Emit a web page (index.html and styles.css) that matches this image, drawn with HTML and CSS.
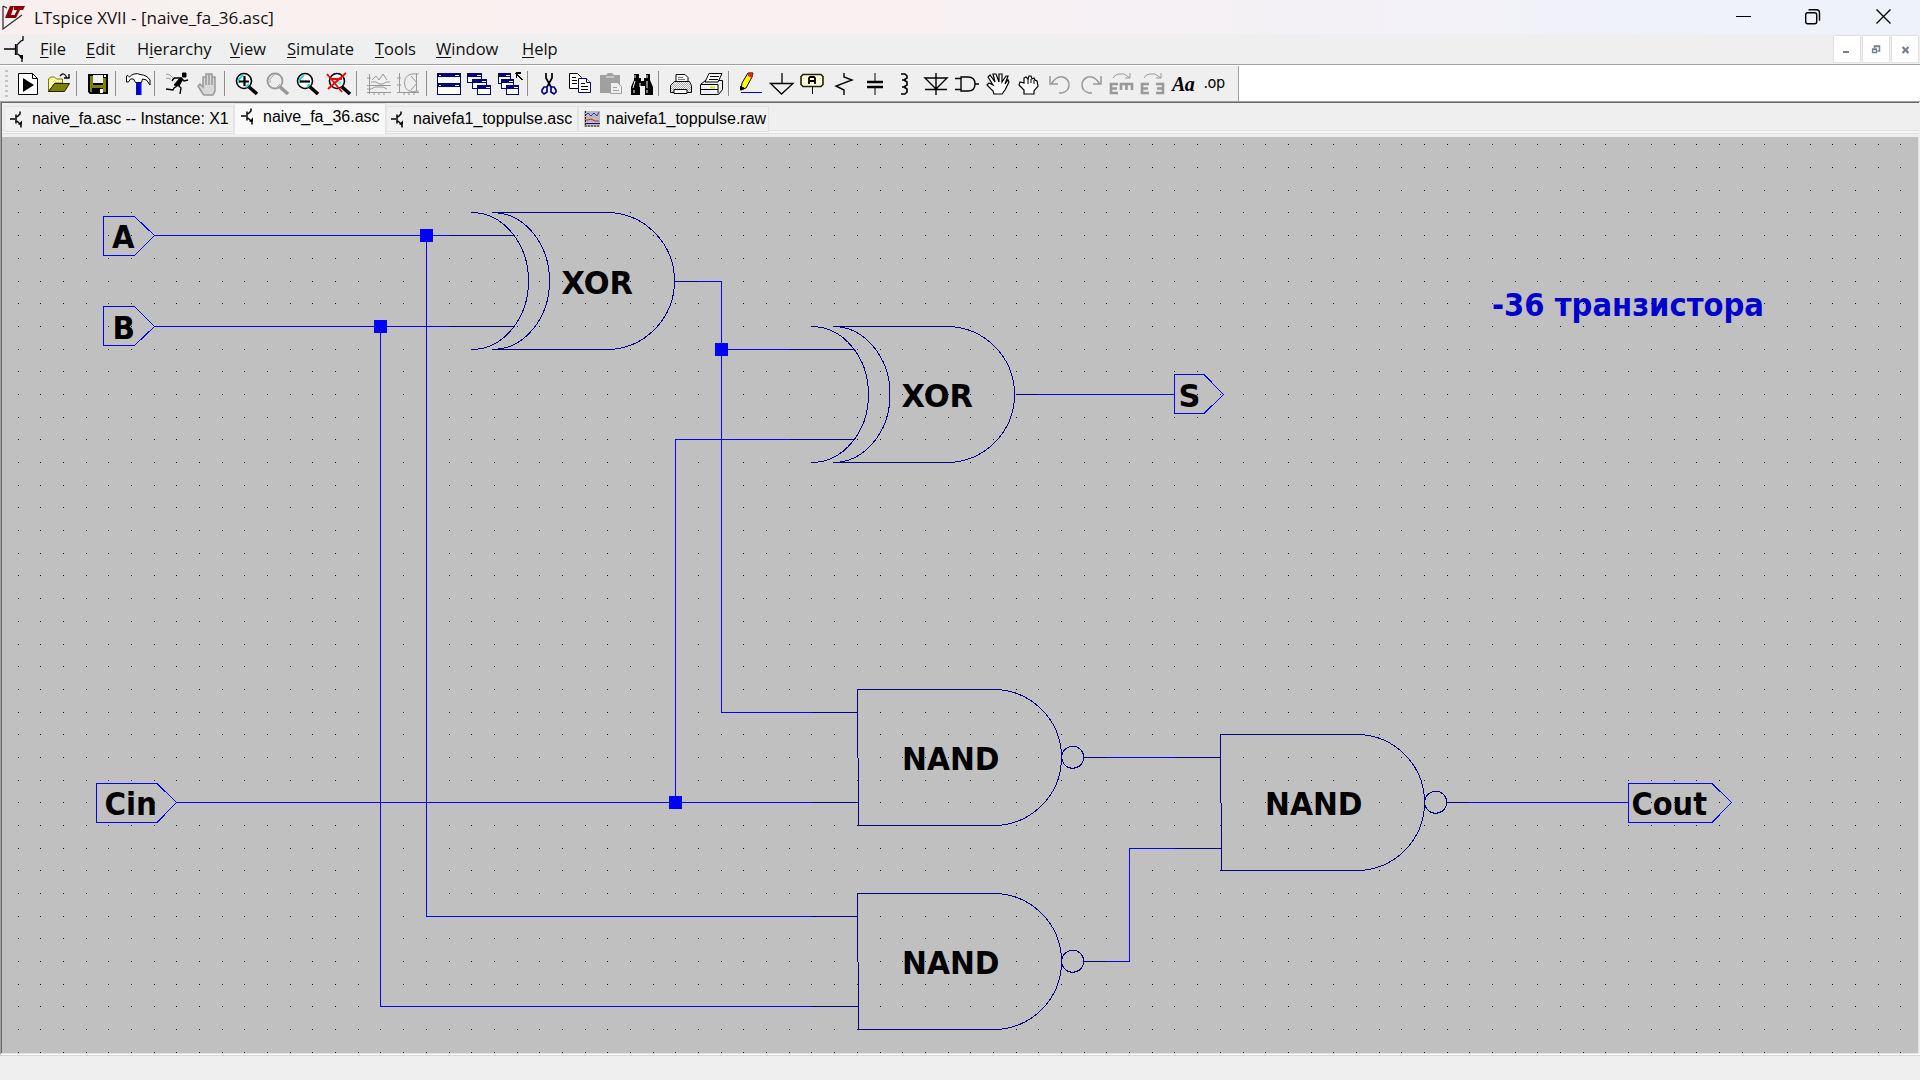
FILE: index.html
```html
<!DOCTYPE html>
<html lang="en">
<head>
<meta charset="utf-8">
<title>LTspice XVII - [naive_fa_36.asc]</title>
<link rel="stylesheet" href="styles.css">
</head>
<body>
<svg class="defs" aria-hidden="true">
  <defs>
    <pattern id="dither" width="2" height="2" patternUnits="userSpaceOnUse"><rect width="2" height="2" fill="#fff"/><path d="M0 .5h1M1 1.5h1" stroke="#aaa"/></pattern>
    <pattern id="ydither" width="2" height="2" patternUnits="userSpaceOnUse"><rect width="2" height="2" fill="#ffff58"/><path d="M0 .5h1M1 1.5h1" stroke="#fff"/></pattern>
    <symbol id="transistor" viewBox="0 0 14 16"><path d="M0 7.500h5M6 3v9M7 5.500l3-3V0M7 9.500l4 4V16" fill="none" stroke="#000" stroke-width="1.500"/><path d="M8 13h4v-4z"/></symbol>
    <symbol id="nand" viewBox="0 0 230 138"><path d="M.5 68.500V.5H136.500A68 68 0 0 1 136.500 136.500H.5M1.500 68.500V136.500"/><circle cx="215.700" cy="68.300" r="11"/></symbol>
  </defs>
</svg>
<div class="app">
  <header class="titlebar">
    <svg class="logo" width="26" height="30" viewBox="0 0 26 30"><path d="M3 4v23l19-14M3 4l4 2" fill="none" stroke="#333" stroke-width="1.300"/><path d="M10 4h4l-3 9h4l-1 3H5zM14 4h11l-2 4h-3l-4 8h-3l4-8h-3z" fill="#8b0008"/></svg>
    <h1 class="title">LTspice XVII - [naive_fa_36.asc]</h1>
    <svg class="winctl" width="160" height="34" viewBox="1736 0 160 34" fill="none" stroke="#000" stroke-width="1.400"><path d="M1736 16.500h15" stroke-width="1"/><rect x="1805.700" y="12.700" width="11" height="11" rx="2"/><path d="M1808.500 9.700h8q3 0 3 3v8"/><path d="M1876.500 9.500l14 14m0-14l-14 14"/></svg>
  </header>
  <nav class="menubar">
    <svg class="menu-icon" width="22" height="26" viewBox="0 0 22 26"><path d="M1 13h11M12.500 8v11M14 8v11M14 9l4-4 2-1V0M15 18l4 4v4" fill="none" stroke="#000" stroke-width="1.300"/><path d="M16 19h4v4h-2z"/></svg>
    <span class="m file"><u>F</u>ile</span><span class="m edit"><u>E</u>dit</span><span class="m hier">H<u>i</u>erarchy</span><span class="m view"><u>V</u>iew</span><span class="m sim"><u>S</u>imulate</span><span class="m tools"><u>T</u>ools</span><span class="m win"><u>W</u>indow</span><span class="m help"><u>H</u>elp</span>
    <div class="mdi">
      <span><svg width="26" height="26"><path d="M9 16h6" stroke="#74808e" stroke-width="2"/></svg></span>
      <span><svg width="26" height="26" fill="none" stroke="#74808e"><path d="M11.500 12v-2h5v5h-2M11 10.500h6" stroke-width="1.500"/><path d="M9.500 13.500h4v3h-4zM9 13h5" stroke-width="1.300"/></svg></span>
      <span><svg width="26" height="26"><path d="M10.500 11l6 6m0-6l-6 6" stroke="#74808e" stroke-width="2.200"/></svg></span>
    </div>
  </nav>
  <div class="toolrow">
    <div class="toolbar">
      <i class="grip"></i>
      <b><svg viewBox="0 0 24 24"><path d="M2.500 1.500h14l5 5v16h-19z" fill="#fff" stroke="#000"/><path d="M16.500 1.500v5h5" fill="none" stroke="#000"/><path d="M7 6l11 7-11 7z"/></svg></b>
      <b><svg viewBox="0 0 24 24"><path d="M1.500 20V7l2-2h4l2 2h6v4H8z" fill="url(#ydither)" stroke="#770"/><path d="M1.500 19.500l6-8h15l-5 8z" fill="#808000" stroke="#220"/><path d="M13 4q4-5 7 2m2-4v4h-5" fill="none" stroke="#000" stroke-width="1.300"/></svg></b>
      <s></s>
      <b><svg viewBox="0 0 24 24"><path d="M2 2h20v20H4l-2-2z"/><path d="M4 4h3v9h10V6h3v14h-3v-4H6v4H4z" fill="#808000"/><path d="M7 3h10v8H7z" fill="#efefef"/><path d="M18 3h2v2h-2zM14 17h3v4h-3z" fill="#fff"/></svg></b>
      <s></s>
      <b><svg viewBox="0 0 24 24"><path d="M.5 4v6h2l2-3h3l2 3.500h6l1-3.500 4 1 3.500 5V8Q21 3 14 2.500 12 1 8 2 5 3 3.500 5L2 3.500z" fill="#fff" stroke="#000"/><path d="M10 11h5.500v12H10z" fill="#00f"/><path d="M11 11h1.500v11H11z" fill="#000080"/></svg></b>
      <s></s>
      <b><svg viewBox="0 0 24 24" fill="none" stroke="#000"><path d="M17.500 1h3.500v4h-3.500z" fill="#000"/><path d="M9 6h8M17 7l2 2 4-1M9 6L7 9M13 13l3 3-1 6M12 14l-3 2-1 2-7-1" stroke-width="1.400"/><path d="M15 6l-6 7 5 1 4-7z" fill="#000"/><path d="M1 2l4 1 3 3M1 6l5 1" stroke="#999"/></svg></b>
      <b><svg viewBox="0 0 24 24"><path d="M7 22l-5-8 2-2 3 3V5h3v8V2h3v11V2h3v11V5h3v14l-2 4H8z" fill="#d8d8d8" stroke="#999" stroke-width="1.500"/></svg></b>
      <s></s>
      <b><svg viewBox="0 0 24 24"><circle cx="9" cy="9" r="7.500" fill="#fff" stroke="#000" stroke-width="1.600"/><path d="M4 11V7l4-4M11 15l3-3" stroke="#2dd" stroke-width="2" fill="none"/><path d="M4 9.500h10M9.500 4v10" stroke="#000" stroke-width="2.200"/><path d="M14 15l8 7" stroke="#000" stroke-width="3.600"/></svg></b>
      <b><svg viewBox="0 0 24 24"><circle cx="9" cy="9" r="7.500" fill="#eee" stroke="#999" stroke-width="1.800"/><path d="M4 11V7l4-4M11 15l3-3" stroke="#aaa" fill="none"/><path d="M14 15l8 7" stroke="#999" stroke-width="3.600"/></svg></b>
      <b><svg viewBox="0 0 24 24"><circle cx="9" cy="9" r="7.500" fill="#fff" stroke="#000" stroke-width="1.600"/><path d="M4 11V7l4-4M11 15l3-3" stroke="#2dd" stroke-width="2" fill="none"/><path d="M4 9.500h10" stroke="#000" stroke-width="2.200"/><path d="M14 15l8 7" stroke="#000" stroke-width="3.600"/></svg></b>
      <b><svg viewBox="0 0 24 24"><circle cx="10" cy="9" r="7.500" fill="#fff" stroke="#000" stroke-width="1.600"/><path d="M6 10l4-5 4 5v3z" fill="#7ee"/><path d="M15 15l8 7" stroke="#000" stroke-width="3.600"/><path d="M0 2l15 18M19 1L1 17M3 7h12" stroke="#f00" stroke-width="1.800"/></svg></b>
      <s></s>
      <b><svg viewBox="0 0 24 24" fill="none" stroke="#999"><path d="M2.500 2v20M0 20.500h24M0 13.500h24M5 8l4-4 3 4 4-6 4 6M4 10h5l3 2h4l3-2h4M4 17l4-2h8l4 2M7 20v3m5-3v3m5-3v3M0 6h4M0 17h4"/></svg></b>
      <b><svg viewBox="0 0 24 24" fill="none" stroke="#999"><path d="M2.500 1v20M0 20.500h22M21.500 2q-14-2-14 9t14 8M14 4l6 7-6 7M19.500 1v18M0 6h4M0 13h4M7 20v3m5-3v3m5-3v3"/></svg></b>
      <s></s>
      <b><svg viewBox="0 0 24 24" shape-rendering="crispEdges"><path d="M0 1h24v22H0z" fill="#000080"/><path d="M1 5h22v6H1zM1 15h22v7H1z" fill="#fff"/><path d="M2 3h2M18 3h4M2 13h2M18 13h4" stroke="#fff"/></svg></b>
      <b><svg viewBox="0 0 24 24" shape-rendering="crispEdges"><path d="M0 1h15v10H0zM5 7h15v10H5zM10 13h14v10H10z" fill="#000080"/><path d="M1 5h13v2H5v3H1zM6 11h13v2h-9v3H6zM11 17h12v5H11zM9 3h1M12 3h2M14 9h1M17 9h2M19 15h1" fill="#fff"/><path d="M10 3h4M15 9h4M19 15h4" stroke="#fff"/></svg></b>
      <b><svg viewBox="0 0 24 24" shape-rendering="crispEdges"><path d="M0 1h13v11H0zM3 7h13v10H3zM8 13h13v10H8z" fill="#000080"/><path d="M1 5h11v2H3v4H1zM4 11h11v2H8v3H4zM9 17h11v5H9z" fill="#fff"/><path d="M8 3h4M11 9h4M16 15h4" stroke="#fff"/><path d="M18 1h5M18.500 1v5M18 1l6 7" stroke="#000" stroke-width="1.500"/></svg></b>
      <s></s>
      <b><svg viewBox="0 0 24 24" fill="none"><path d="M9 1v5l5 9M15 1v5l-5 9" stroke="#000" stroke-width="1.700"/><path d="M10 15H7l-2 3v2l2 2 3-2zM14 15h3l2 3v2l-2 2-3-2z" stroke="#000080" stroke-width="1.700"/></svg></b>
      <b><svg viewBox="0 0 24 24" fill="#fff"><path d="M1.500 1.500h8l4 4v11h-12z" stroke="#000"/><path d="M10.500 6.500h8l4 4v10h-12z" stroke="#000080"/><path d="M18.500 6.500v4h4" stroke="#000080"/><path d="M4 5.500h4M4 8.500h5M4 11.500h5M13 11.500h4M13 14.500h7M13 17.500h7" stroke="#000"/></svg></b>
      <b><svg viewBox="0 0 24 24"><path d="M1 3h6l2-2h4l2 2h6v18H1z" fill="#a0a0a0"/><path d="M7 5h8" stroke="#eee"/><path d="M11.500 10.500h7l4 4v7h-11z" fill="#eee" stroke="#a0a0a0"/><path d="M14 15.500h4M14 18.500h6" stroke="#a0a0a0"/></svg></b>
      <b><svg viewBox="0 0 24 24"><path d="M4 2h5v4h2v3h3V6h2V2h4v6l3 7v8h-8v-9h-5v9H1v-8l3-7z"/><path d="M5 3v3M17 3v3M5 9l-2 7M10 11v4M17 9v7M4 18v3M17 18v3" stroke="#fff"/></svg></b>
      <s></s>
      <b><svg viewBox="0 0 24 24"><path d="M7 10V2.500h9l3 3V10" fill="#fff" stroke="#000"/><path d="M1.500 20.500v-7l4-4h15l2 4v7z" fill="url(#dither)" stroke="#000"/><path d="M5 17.500h13v4H5z" fill="#fff" stroke="#000"/><path d="M9 5.500h5M9 7.500h7" stroke="#777"/></svg></b>
      <b><svg viewBox="0 0 24 24" fill="#fff" stroke="#000"><path d="M.5 12.500l5-4h17v9l-4 5H.5z" fill="#eee"/><path d="M5 10l4-8.500h13L18 10z"/><path d="M10 4.500h9M9 7.500h9M1 12.500h17v9M1 17.500h17"/><path d="M10 15.500h5" stroke="#dd0" stroke-width="2"/></svg></b>
      <s></s>
      <b><svg viewBox="0 0 24 24"><path d="M3 11l6-10h5l-1 4-6 11-5 2z" fill="#ff0" stroke="#000"/><path d="M9 2l2-2 3 2-1 4-4-2z" fill="#f02020"/><path d="M2 14v3l3-1" stroke="#000" stroke-width="2"/><path d="M2 20.500h21" stroke="#00f"/></svg></b>
      <b><svg viewBox="0 0 24 24" fill="none" stroke="#000" stroke-width="1.300"><path d="M12 1v11M.5 11.500h22.500L11.500 22z"/></svg></b>
      <b><svg viewBox="0 0 24 24"><path d="M2 2.500h18l2 2v8l-2 2H2l-2-2v-8z" fill="#ffffe0" stroke="#220" stroke-width="1.600"/><path d="M11.500 15v7" stroke="#000"/><path d="M8 12V6l1-1h4l1 1v6M8 9h6" stroke="#000" stroke-width="1.800" fill="none"/></svg></b>
      <b><svg viewBox="0 0 24 24" fill="none" stroke="#000" stroke-width="1.400"><path d="M12 1v4l8 3L4 14l8 4v5"/></svg></b>
      <b><svg viewBox="0 0 24 24" stroke="#000"><path d="M12 1v8M12 15v8"/><path d="M4 10h16M4 15h16" stroke-width="2.300"/></svg></b>
      <b><svg viewBox="0 0 24 24" fill="none" stroke="#000" stroke-width="1.600"><path d="M8 2h4l2 2v2l-3 2H9m2 0l3 2v3l-3 2H9m2 0l3 2v3l-2 2H8"/></svg></b>
      <b><svg viewBox="0 0 24 24" fill="none" stroke="#000" stroke-width="1.400"><path d="M1 6h22L12 17zM12 1v22M1 17.500h22"/></svg></b>
      <b><svg viewBox="0 0 24 24" fill="none" stroke="#000" stroke-width="1.400"><path d="M0 6.500h6M0 17.500h6M6 5h7q7 0 7 7t-7 7H6zM20 12h4"/></svg></b>
      <b><svg viewBox="0 0 24 24"><path d="M8 22l-1-3-6-6 2-2 4 2-5-8 2-2 5 7-2-8h3l3 8V2h3v8l4-6h2l-3 8 3-4 1 2-4 8-3 4z" fill="#fff" stroke="#000" stroke-width="1.200"/></svg></b>
      <b><svg viewBox="0 0 24 24"><path d="M7 22v-4l-5-5 1-3 4 1V6l2-1 2 2 1-3h2l1 3 2-1 1 2 2 1 1 5-4 5v3z" fill="#fff" stroke="#000" stroke-width="1.200"/><path d="M11 7v5M14 7v4M17 8v4" stroke="#000"/></svg></b>
      <b><svg viewBox="0 0 24 24" fill="none" stroke="#999" stroke-width="1.500"><path d="M2 4v8h8M3 12q6-9 12-7 6 2 6 8t-7 8h-3"/></svg></b>
      <b><svg viewBox="0 0 24 24" fill="none" stroke="#999" stroke-width="1.500"><path d="M22 4v8h-8M21 12Q15 3 9 5q-6 2-6 8t7 8h3"/></svg></b>
      <b><svg viewBox="0 0 24 24" fill="none" stroke="#999"><path d="M4 6q2-4 6-4h5l6 4m0-5v5h-5"/><path d="M9 12H2v9h7M2 16.500h6M12 18v-6h11v6M17.500 13v5" stroke-width="2.600"/></svg></b>
      <b><svg viewBox="0 0 24 24" fill="none" stroke="#999"><path d="M4 6q2-4 6-4h5l6 4m0-5v5h-5"/><path d="M9 12H2v9h7M2 16.500h6M16 12h7v9h-7M17 16.500h6" stroke-width="2.600"/></svg></b>
      <b class="aa">Aa</b>
      <b class="op">.op</b>
    </div>
  </div>
  <div class="workspace">
    <div class="tabs">
      <div class="tab t1"><svg width="14" height="17"><use href="#transistor"/></svg><span>naive_fa.asc -- Instance: X1</span></div>
      <div class="tab t2"><svg width="14" height="17"><use href="#transistor"/></svg><span>naive_fa_36.asc</span></div>
      <div class="tab t3"><svg width="14" height="17"><use href="#transistor"/></svg><span>naivefa1_toppulse.asc</span></div>
      <div class="tab t4"><svg width="16" height="16" fill="none"><path d="M0 0h16v16H0z" fill="#bbb"/><path d="M1 5l3-3 3 3 3-3 3 3 2-4" stroke="#33d"/><path d="M1 9h3l3-1 4 2h4" stroke="#d22"/><path d="M1 12.500h15" stroke="#118"/><path d="M1.500 0v14M1 15h15" stroke="#222" stroke-dasharray="2 1"/></svg><span>naivefa1_toppulse.raw</span></div>
    </div>
    <svg class="sheet" width="1916" height="916" viewBox="2 137 1916 916">
      <path id="grid" class="grid"/>
      <g class="wire">
        <path d="M154 235.500H449M426.500 235V916.500H812M154 326.500H449M380.500 326V1006.500H812M698 281.500H721.500V712.500H812M721 349.500H790M790 439.500H675.500V802.500M176 802.500H812M1038 394.500H1174M1106 757.500H1175M1106 961.500H1129.500V848.500H1175M1469 802.500H1628"/>
        <path d="M103.500 216.500h31L154.500 235.500L134.500 255.500h-31zM103.500 306.500h31L154.500 326.500L134.500 345.500h-31zM1174.500 374.500h29.500L1223.500 394.500L1204 413.500h-29.500zM96.500 783.500H157L176.500 802.500L157 822.500H96.500zM1628.500 783.500H1712L1731.500 802.500L1712 822.500H1628.500z"/>
      </g>
      <g class="node"><path d="M420 229h13v13h-13zM374 320h13v13h-13zM715 343h13v13h-13zM669 796h13v13h-13z"/></g>
      <g class="part">
        <path d="M449 235.500H514M449 326.500H514M674 281.500H698M790 349.500H854M790 439.500H854M1016 394.500H1038M812 712.500H857M812 802.500H858M812 916.500H857M812 1006.500H858M1084 757.500H1106M1084 961.500H1106M1175 757.500H1220M1175 848.500H1221M1447 802.500H1469"/>
        <path d="M471.500 212.500A57 68.500 0 0 1 471.500 349.500M492.500 212.500A57 68.500 0 0 1 492.500 349.500M492.500 212.500H606.500A68 68.500 0 0 1 606.500 349.500H492.500"/>
        <path d="M811.500 326.500A57 68 0 0 1 811.500 462.500M833 326.500A57 68 0 0 1 833 462.500M833 326.500H946.500A68 68 0 0 1 946.500 462.500H833"/>
        <use href="#nand" x="857" y="689" width="230" height="138"/>
        <use href="#nand" x="857" y="893" width="230" height="138"/>
        <use href="#nand" x="1220" y="734" width="230" height="138"/>
      </g>
      <g class="label">
        <text x="112" y="248" textLength="22.500" lengthAdjust="spacingAndGlyphs">A</text>
        <text x="112.500" y="339" textLength="22.500" lengthAdjust="spacingAndGlyphs">B</text>
        <text x="104.500" y="815" textLength="52.500" lengthAdjust="spacingAndGlyphs">Cin</text>
        <text x="561.500" y="294" textLength="71.500" lengthAdjust="spacingAndGlyphs">XOR</text>
        <text x="901.500" y="407" textLength="71.500" lengthAdjust="spacingAndGlyphs">XOR</text>
        <text x="1178.500" y="407" textLength="22" lengthAdjust="spacingAndGlyphs">S</text>
        <text x="902" y="770" textLength="97.500" lengthAdjust="spacingAndGlyphs">NAND</text>
        <text x="902" y="974" textLength="97.500" lengthAdjust="spacingAndGlyphs">NAND</text>
        <text x="1265" y="815" textLength="97.500" lengthAdjust="spacingAndGlyphs">NAND</text>
        <text x="1631.500" y="815" textLength="75.500" lengthAdjust="spacingAndGlyphs">Cout</text>
        <text class="note" x="1492" y="315.500" textLength="272" lengthAdjust="spacingAndGlyphs">-36 транзистора</text>
      </g>
    </svg>
  </div>
  <footer class="status"></footer>
</div>
<script src="grid.js"></script>
</body>
</html>
```
FILE: styles.css
```css
* { box-sizing: border-box; }
body { margin: 0; background: #efefef; overflow: hidden; }
.defs { display: block; width: 0; height: 0; }
.app { width: 1920px; height: 1080px; display: flex; flex-direction: column; font-family: "Open Sans", "Noto Sans", sans-serif; color: #111; }
.titlebar { height: 34px; display: flex; align-items: center; background: linear-gradient(90deg, #f9efef 0%, #f8f0f1 45%, #eff2fa 90%, #eef2fa 100%); padding-right: 24px; flex: none; }
.logo { margin: 0 8px 0 0; flex: none; }
.title { margin: 0; font-size: 17px; font-weight: 400; line-height: 34px; letter-spacing: 0; padding-top: 1px; white-space: nowrap; }
.winctl { margin-left: auto; }
.menubar { height: 31px; display: flex; align-items: center; border-bottom: 1px solid #a0a0a0; flex: none; font-size: 16.5px; }
.menu-icon { margin: 0 15px 0 3px; }
.m { white-space: nowrap; flex: none; line-height: 30px; }
.m u { text-underline-offset: 2px; text-decoration-thickness: 1px; }
.file { width: 46px; margin-left: 0; }
.edit { width: 51px; }
.hier { width: 93px; }
.view { width: 57px; }
.sim { width: 88px; }
.tools { width: 61px; }
.win { width: 86px; }
.mdi { margin-left: auto; display: flex; gap: 3px; padding-right: 2px; }
.mdi span { width: 26px; height: 26px; background: #fff; outline: 1px solid #e2e2e2; }
.mdi svg { display: block; }
.toolrow { height: 36px; background: #fff; flex: none; border-top: 1px solid #fff; }
.toolbar { width: 1239px; height: 35px; background: #efefef; border-right: 1px solid #a0a0a0; display: flex; align-items: center; }
.grip { width: 3px; height: 28px; margin: 0 5px 0 5px; flex: none; background: repeating-linear-gradient(180deg, #c4c4c4 0 2px, transparent 2px 5px); }
.toolbar b { width: 30.87px; height: 24px; flex: none; display: flex; justify-content: center; }
.toolbar svg { width: 24px; height: 24px; overflow: visible; flex: none; }
.toolbar s { width: 8.3px; height: 25px; flex: none; display: block; padding-left: 1px; }
.toolbar s::before { content: ""; display: block; width: 1px; height: 25px; background: #8c8c8c; }
.toolbar .aa { font: italic bold 20px/24px "Liberation Serif", serif; color: #000; letter-spacing: -.5px; }
.toolbar .op { font: 16px/22px "DejaVu Sans Condensed", "DejaVu Sans", sans-serif; font-stretch: condensed; color: #000; letter-spacing: -.5px; }
.workspace { height: 954px; flex: none; border-top: 1px solid #a0a0a0; border-left: 1px solid #a0a0a0; border-bottom: 1px solid #fff; background: #efefef; }
.tabs { height: 35px; display: flex; align-items: flex-start; border-top: 1px solid #696969; border-left: 1px solid #696969; padding: 0 0 0 2px; margin-right: 1px; font: 16px "Liberation Sans", sans-serif; color: #000; background: linear-gradient(#efefef 0 27px, #dedede 27px 28px, #f8f8f8 28px 30px, #e0e0e0 30px 31px, #efefef 31px); }
.tab { display: flex; align-items: center; height: 26px; margin-top: 3px; border: 1px solid #e2e2e2; border-left: 1px solid #e6e6e6; background: #f1f1f1; white-space: nowrap; }
.tab svg { flex: none; }
.t1 { width: 230px; padding-left: 5px; gap: 8px; letter-spacing: -.06px; }
.t2 { width: 152px; height: 31px; margin-top: 0; padding: 0 0 5px 6px; gap: 8px; background: #f9f9f9; border-bottom: 0; }
.t3 { width: 192px; padding-left: 4px; gap: 8px; }
.t4 { width: 191px; padding-left: 5px; gap: 6px; }
.sheet { display: block; background: #c0c0c0; border-left: 0; box-shadow: -1px 0 0 #696969, 1px 0 0 #e3e3e3, 0 1px 0 #e3e3e3; margin-left: 1px; }
.grid, .wire, .part, .node { shape-rendering: crispEdges; fill: none; }
.grid { stroke: #000; }
.wire { stroke: #00f; }
.part { stroke: #000080; }
.node { fill: #00f; }
.label { font: bold 31.500px "DejaVu Sans Condensed", "DejaVu Sans", sans-serif; font-stretch: condensed; fill: #000; }
.note { fill: #0000cd; }
.status { flex: 1; border-top: 1px solid #d7d7d7; background: #efefef; }
```
FILE: grid.js
```js
// Snap grid of the sheet: one black pixel per grid point.
const PITCH = 22.685;
let d = "";
for (let r = 0; r < 41; r++) {
  const y = Math.floor(144.93 + r * PITCH);
  for (let c = 0; c < 84; c++) {
    d += `M${Math.floor(18.02 + c * PITCH)} ${y}.5h1`;
  }
}
document.getElementById("grid").setAttribute("d", d);
```
